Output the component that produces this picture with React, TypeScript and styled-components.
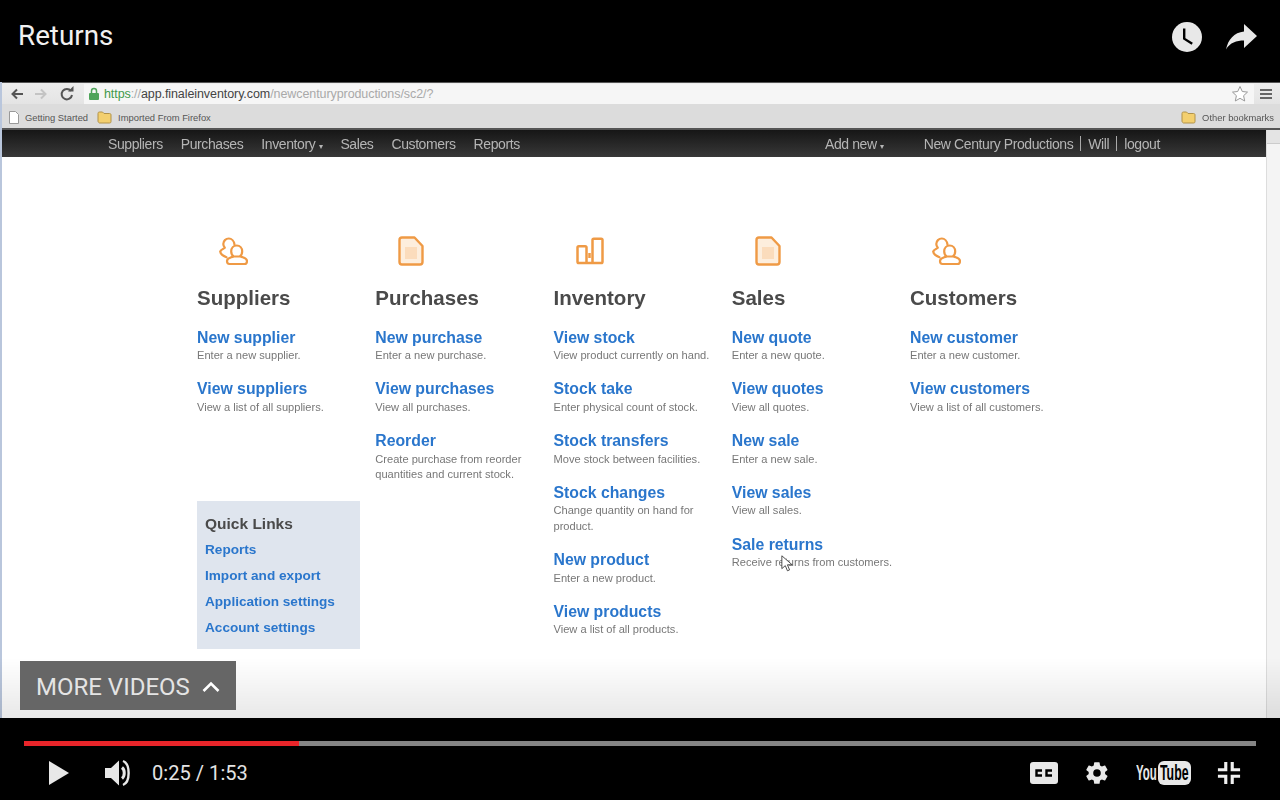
import React from "react";
import styled, { createGlobalStyle } from "styled-components";

const Global = createGlobalStyle`
  html, body { margin: 0; padding: 0; background: #000; overflow: hidden; }
  * { box-sizing: border-box; }
`;

type Item = { link: string; desc: string };
type Col = { title: string; icon: "people" | "doc" | "chart"; items: Item[] };

const columns: Col[] = [
  {
    title: "Suppliers",
    icon: "people",
    items: [
      { link: "New supplier", desc: "Enter a new supplier." },
      { link: "View suppliers", desc: "View a list of all suppliers." },
    ],
  },
  {
    title: "Purchases",
    icon: "doc",
    items: [
      { link: "New purchase", desc: "Enter a new purchase." },
      { link: "View purchases", desc: "View all purchases." },
      { link: "Reorder", desc: "Create purchase from reorder quantities and current stock." },
    ],
  },
  {
    title: "Inventory",
    icon: "chart",
    items: [
      { link: "View stock", desc: "View product currently on hand." },
      { link: "Stock take", desc: "Enter physical count of stock." },
      { link: "Stock transfers", desc: "Move stock between facilities." },
      { link: "Stock changes", desc: "Change quantity on hand for product." },
      { link: "New product", desc: "Enter a new product." },
      { link: "View products", desc: "View a list of all products." },
    ],
  },
  {
    title: "Sales",
    icon: "doc",
    items: [
      { link: "New quote", desc: "Enter a new quote." },
      { link: "View quotes", desc: "View all quotes." },
      { link: "New sale", desc: "Enter a new sale." },
      { link: "View sales", desc: "View all sales." },
      { link: "Sale returns", desc: "Receive returns from customers." },
    ],
  },
  {
    title: "Customers",
    icon: "people",
    items: [
      { link: "New customer", desc: "Enter a new customer." },
      { link: "View customers", desc: "View a list of all customers." },
    ],
  },
];

const quickLinks = ["Reports", "Import and export", "Application settings", "Account settings"];

const PeopleIcon = () => (
  <svg width="30" height="30" viewBox="0 0 30 30" fill="none" stroke="#ef9a45" strokeWidth="2.200" strokeLinejoin="round" strokeLinecap="round">
    <path d="M16.500 8.500C16 5 13.500 2.500 10.800 2.500 7.800 2.500 5.300 5 5.300 8c0 1.500.6 2.800 1.500 3.800C5 13 2.800 14 2.200 15.500c.3 2 3 4.500 6.300 5.800" />
    <path d="M18.700 9.500c3.200 0 5.500 2.600 5.500 5.800 0 2.400-1 4.200-2.400 5.200h-6.200c-1.400-1-2.400-2.800-2.400-5.200 0-3.200 2.300-5.800 5.500-5.800z" />
    <path d="M15 20.500c-1.500 1-6 1.500-6 4.500 0 2 .8 3 2.500 3h15c1.700 0 2.500-1 2.500-3 0-3-4.500-3.500-6-4.500" />
  </svg>
);

const DocIcon = () => (
  <svg width="30" height="30" viewBox="0 0 30 30" fill="#fdeedd" stroke="#ef9a45" strokeWidth="2.400" strokeLinejoin="round">
    <path d="M3.500 4c0-1.500 1-2.500 2.500-2.500h12.500l8 8.500v16c0 1.500-1 2.500-2.500 2.500H6c-1.500 0-2.500-1-2.500-2.500z" />
    <rect x="9" y="11" width="12" height="12" fill="#fbdcbc" stroke="none" />
  </svg>
);

const ChartIcon = () => (
  <svg width="30" height="30" viewBox="0 0 30 30" fill="none" stroke="#ef9a45" strokeWidth="2.500" strokeLinejoin="round">
    <path d="M2.500 11.500c0-.8.5-1.300 1.300-1.300h6.400c.8 0 1.300.5 1.300 1.300V27H3.800c-.8 0-1.300-.5-1.300-1.300zM11.500 27h6M17.500 27V4c0-.8.5-1.300 1.300-1.300h7.400c.8 0 1.300.5 1.300 1.300v21.700c0 .8-.5 1.300-1.300 1.300h-8.700zM14.500 17v5" />
  </svg>
);

const icons = { people: <PeopleIcon />, doc: <DocIcon />, chart: <ChartIcon /> };

const Folder = () => (
  <svg width="15" height="13" viewBox="0 0 15 13">
    <path d="M1 2.500C1 1.500 1.500 1 2.500 1h3l1.500 1.500h5.500c1 0 1.500.5 1.500 1.500v6.500c0 1-.5 1.500-1.500 1.500h-10C1.500 11.500 1 11 1 10z" fill="#f3cf6e" stroke="#b0924a" strokeWidth="1" />
  </svg>
);

const App = () => (
  <Player>
    <Global />
    <TitleBar>
      <Title>Returns</Title>
      <TopIcons>
        <svg width="32" height="32" viewBox="0 0 32 32">
          <circle cx="16" cy="16" r="15" fill="#e8e8e8" />
          <path d="M13.200 7.500v10.200l8 5" fill="none" stroke="#000" strokeWidth="2.400" />
        </svg>
        <svg width="32" height="28" viewBox="0 0 32 28">
          <path d="M19 1l13 12-13 12v-7.500C11.500 17.500 5 19.500 1 26.500 3 16.500 9 9.500 19 8.500z" fill="#e8e8e8" />
        </svg>
      </TopIcons>
    </TitleBar>

    <Video>
      <Capture>
        <UrlRow>
          <svg width="70" height="16" viewBox="0 0 70 16">
            <path d="M15 8H5M9 3.500L4.500 8 9 12.500" fill="none" stroke="#555" strokeWidth="2" />
            <path d="M27 8h10M33 3.500L37.500 8 33 12.500" fill="none" stroke="#c4c4c4" strokeWidth="2" />
            <path d="M63 5a5.200 5.200 0 1 0 1 4" fill="none" stroke="#555" strokeWidth="2" />
            <path d="M60 5.500h5.500V0z" fill="#555" />
          </svg>
          <UrlField>
            <svg width="12" height="14" viewBox="0 0 12 14">
              <rect x="1" y="6" width="10" height="7" rx="1" fill="#4fa45a" />
              <path d="M3.500 6V4a2.500 2.500 0 0 1 5 0v2" fill="none" stroke="#4fa45a" strokeWidth="1.500" />
            </svg>
            <Url>
              <UrlGreen>https</UrlGreen>
              <UrlGrey>://</UrlGrey>
              app.finaleinventory.com
              <UrlGrey>/newcenturyproductions/sc2/?</UrlGrey>
            </Url>
            <Star viewBox="0 0 18 18" width="18" height="18">
              <path d="M9 1.500l2.300 5 5.200.6-3.900 3.600 1.100 5.300L9 13.300 4.300 16l1.100-5.300L1.500 7.100l5.200-.6z" fill="#fff" stroke="#9a9a9a" strokeWidth="1" />
            </Star>
          </UrlField>
          <Burger><i /><i /><i /></Burger>
        </UrlRow>

        <BookmarkRow>
          <svg width="10" height="13" viewBox="0 0 10 13">
            <path d="M.5.500h6l3 3v9h-9z" fill="#fff" stroke="#999" />
          </svg>
          <Bookmark>Getting Started</Bookmark>
          <Folder />
          <Bookmark>Imported From Firefox</Bookmark>
          <BookmarkSpacer />
          <Folder />
          <Bookmark>Other bookmarks</Bookmark>
        </BookmarkRow>

        <PageArea>
          <PageMain>
            <NavBar>
              <NavGroup>
                <NavItem>Suppliers</NavItem>
                <NavItem>Purchases</NavItem>
                <NavItem>Inventory <Caret>▾</Caret></NavItem>
                <NavItem>Sales</NavItem>
                <NavItem>Customers</NavItem>
                <NavItem>Reports</NavItem>
              </NavGroup>
              <NavRight>
                <NavItem>Add new <Caret>▾</Caret></NavItem>
                <NavUser>
                  <NavItem>New Century Productions</NavItem>
                  <Pipe />
                  <NavItem>Will</NavItem>
                  <Pipe />
                  <NavItem>logout</NavItem>
                </NavUser>
              </NavRight>
            </NavBar>

            <Grid>
              {columns.map((c, i) => (
                <Column key={c.title}>
                  <IconBox>{icons[c.icon]}</IconBox>
                  <Heading>{c.title}</Heading>
                  {c.items.map((it) => (
                    <Entry key={it.link}>
                      <EntryLink>{it.link}</EntryLink>
                      <EntryDesc>{it.desc}</EntryDesc>
                    </Entry>
                  ))}
                  {i === 0 && (
                    <QuickBox>
                      <QuickTitle>Quick Links</QuickTitle>
                      {quickLinks.map((q) => (
                        <QuickLink key={q}>{q}</QuickLink>
                      ))}
                    </QuickBox>
                  )}
                </Column>
              ))}
            </Grid>
          </PageMain>
          <Scrollbar>
            <ScrollButton />
          </Scrollbar>
        </PageArea>
      </Capture>

      <Cursor width="12" height="19" viewBox="0 0 14 20">
        <path d="M1 1v15l4-3.500 2.500 6 2.500-1-2.500-6H13z" fill="#fff" stroke="#333" strokeWidth="1" />
      </Cursor>
      <BottomFade />
      <MoreVideos>
        MORE VIDEOS
        <svg width="18" height="12" viewBox="0 0 18 12">
          <path d="M1.500 10L9 2.500 16.500 10" fill="none" stroke="#fff" strokeWidth="2.600" />
        </svg>
      </MoreVideos>
    </Video>

    <Controls>
      <Progress>
        <Played />
      </Progress>
      <ControlRow>
        <ControlLeft>
          <svg width="22" height="26" viewBox="0 0 22 26">
            <path d="M1 1l20 12L1 25z" fill="#e8e8e8" />
          </svg>
          <VolumeIcon width="30" height="28" viewBox="0 0 30 28">
            <path d="M1 9h6l8-7.500v25L7 19H1z" fill="#e8e8e8" />
            <path d="M18 8.500c3 2.500 3 8.500 0 11" fill="none" stroke="#e8e8e8" strokeWidth="3" />
            <path d="M19 2c7.500 3 7.500 21 0 24" fill="none" stroke="#e8e8e8" strokeWidth="2.400" />
          </VolumeIcon>
          <Time>0:25 / 1:53</Time>
        </ControlLeft>
        <ControlRight>
          <svg width="28" height="22" viewBox="0 0 28 22">
            <rect width="28" height="22" rx="3" fill="#e8e8e8" />
            <path d="M12 8.500H6.500v5H12M22 8.500h-5.500v5H22" fill="none" stroke="#000" strokeWidth="2.400" />
          </svg>
          <svg width="26" height="26" viewBox="0 0 24 24">
            <path d="M19.400 13c.1-.3.100-.7.100-1s0-.7-.1-1l2.100-1.600c.2-.2.200-.4.100-.6l-2-3.500c-.1-.2-.4-.3-.6-.2l-2.500 1c-.5-.4-1.100-.7-1.700-1l-.4-2.700c0-.2-.2-.4-.5-.4h-4c-.3 0-.5.200-.5.400l-.4 2.700c-.6.300-1.200.6-1.700 1l-2.500-1c-.2-.1-.5 0-.6.200l-2 3.500c-.1.200-.1.400.1.600L4.400 11c-.1.300-.1.700-.1 1s0 .7.100 1l-2.100 1.600c-.2.200-.2.400-.1.600l2 3.500c.1.200.4.300.6.200l2.500-1c.5.400 1.100.7 1.700 1l.4 2.700c0 .2.200.4.500.4h4c.3 0 .5-.2.500-.4l.4-2.700c.6-.3 1.200-.6 1.700-1l2.500 1c.2.100.5 0 .6-.2l2-3.500c.1-.2.100-.4-.1-.6zM12 15.500a3.500 3.500 0 1 1 0-7 3.500 3.500 0 0 1 0 7z" fill="#e8e8e8" />
          </svg>
          <YouTubeLogo>
            <YouWord><span>You</span></YouWord>
            <TubeWord><span>Tube</span></TubeWord>
          </YouTubeLogo>
          <svg width="24" height="24" viewBox="0 0 26 26">
            <path d="M9.500 1v8.500H1M16.500 1v8.500H25M9.500 25v-8.500H1M16.500 25v-8.500H25" fill="none" stroke="#f0f0f0" strokeWidth="3.400" />
          </svg>
        </ControlRight>
      </ControlRow>
    </Controls>
  </Player>
);

export default App;

const Player = styled.div`
  width: 1280px;
  height: 800px;
  display: flex;
  flex-direction: column;
  background: #000;
  font-family: Roboto, sans-serif;
`;

const TitleBar = styled.div`
  height: 82px;
  flex: none;
  display: flex;
  align-items: flex-start;
  justify-content: space-between;
  padding: 20px 23px 0 18px;
`;

const Title = styled.div`
  color: #f1f1f1;
  font-size: 27.8px;
  line-height: 32px;
`;

const TopIcons = styled.div`
  display: flex;
  align-items: center;
  gap: 22px;
  padding-top: 1px;
`;

const Video = styled.div`
  position: relative;
  height: 636px;
  flex: none;
  overflow: hidden;
  background: #fff;
`;

const Capture = styled.div`
  height: 100%;
  display: flex;
  flex-direction: column;
  border-left: 2px solid #b9c6dc;
  filter: blur(0.65px);
  font-family: "Liberation Sans", Arial, sans-serif;
`;

const UrlRow = styled.div`
  height: 22px;
  flex: none;
  display: flex;
  align-items: center;
  gap: 6px;
  padding: 0 8px 0 6px;
  background: linear-gradient(#ededed, #e4e4e4);
  border-top: 1px solid #555;
`;

const UrlField = styled.div`
  flex: 1;
  height: 20px;
  display: flex;
  align-items: center;
  padding: 0 5px 0 4px;
  background: #f6f6f6;
`;

const Url = styled.div`
  flex: 1;
  margin-left: 4px;
  font-size: 12.5px;
  color: #444;
  letter-spacing: -0.08px;
  white-space: nowrap;
`;

const UrlGreen = styled.span`
  color: #3f9a4c;
`;

const UrlGrey = styled.span`
  color: #a9a9a9;
`;

const Star = styled.svg`
  flex: none;
`;

const Burger = styled.div`
  width: 12px;
  display: flex;
  flex-direction: column;
  gap: 2px;

  i {
    display: block;
    height: 2px;
    background: #666;
  }
`;

const BookmarkRow = styled.div`
  height: 24px;
  flex: none;
  display: flex;
  align-items: center;
  gap: 4px;
  padding: 3px 1px 0 7px;
  background: #dcdcdc;
`;

const Bookmark = styled.span`
  font-size: 9.4px;
  color: #555;
  margin-left: 2px;
  margin-right: 5px;
  white-space: nowrap;
`;

const BookmarkSpacer = styled.div`
  flex: 1;
`;

const PageArea = styled.div`
  flex: 1;
  display: flex;
  min-height: 0;
  border-top: 2px solid #555;
`;

const PageMain = styled.div`
  flex: 1;
  display: flex;
  flex-direction: column;
`;

const Scrollbar = styled.div`
  width: 14px;
  flex: none;
  background: #f4f4f4;
  border-left: 1px solid #ddd;
`;

const ScrollButton = styled.div`
  height: 14px;
  background: #e4e4e4;
  border-bottom: 1px solid #ccc;
`;

const NavBar = styled.div`
  height: 27px;
  flex: none;
  display: flex;
  align-items: center;
  justify-content: space-between;
  padding: 0 106px 0 106px;
  background: linear-gradient(#161616, #383838);
`;

const NavGroup = styled.div`
  display: flex;
  align-items: center;
  gap: 18px;
`;

const NavRight = styled.div`
  display: flex;
  align-items: center;
  gap: 40px;
`;

const NavUser = styled.div`
  display: flex;
  align-items: center;
  gap: 7px;
`;

const NavItem = styled.span`
  color: #b5b5b5;
  font-size: 14px;
  letter-spacing: -0.4px;
  white-space: nowrap;
`;

const Caret = styled.span`
  font-size: 8px;
`;

const Pipe = styled.i`
  display: block;
  width: 1px;
  height: 15px;
  background: #aaa;
`;

const Grid = styled.div`
  display: grid;
  grid-template-columns: repeat(5, 178.25px);
  padding: 79px 0 0 195px;
`;

const Column = styled.div`
  display: flex;
  flex-direction: column;
  align-items: flex-start;
`;

const IconBox = styled.div`
  width: 72px;
  height: 30px;
  display: flex;
  justify-content: center;
`;

const Heading = styled.div`
  margin: 20px 0 16.5px;
  font-size: 20.5px;
  line-height: 24px;
  font-weight: bold;
  color: #4a4a4a;
`;

const Entry = styled.div`
  width: 165px;
  margin-bottom: 14.75px;
`;

const EntryLink = styled.div`
  font-size: 15.8px;
  line-height: 21px;
  font-weight: bold;
  color: #2a76cc;
`;

const EntryDesc = styled.div`
  padding-top: 0.5px;
  font-size: 11.1px;
  line-height: 15.5px;
  color: #777;
`;

const QuickBox = styled.div`
  width: 163px;
  height: 148px;
  margin-top: 71px;
  padding: 14px 8px 0;
  background: #dfe5ee;
`;

const QuickTitle = styled.div`
  font-size: 15.5px;
  line-height: 18px;
  font-weight: bold;
  color: #4a4a4a;
  margin-bottom: 8px;
`;

const QuickLink = styled.div`
  font-size: 13.6px;
  line-height: 18px;
  font-weight: bold;
  color: #2a76cc;
  margin-bottom: 8px;
`;

const Cursor = styled.svg`
  position: absolute;
  left: 781px;
  top: 472px;
`;

const BottomFade = styled.div`
  position: absolute;
  left: 0;
  right: 0;
  bottom: 0;
  height: 60px;
  background: linear-gradient(rgba(0, 0, 0, 0), rgba(0, 0, 0, 0.09));
`;

const MoreVideos = styled.div`
  position: absolute;
  left: 20px;
  top: 579px;
  width: 216px;
  height: 49px;
  display: flex;
  align-items: center;
  gap: 12px;
  padding: 2px 0 0 16px;
  background: #666;
  color: #e4e4e4;
  font-family: Roboto, sans-serif;
  font-size: 24px;
`;

const Controls = styled.div`
  flex: 1;
  padding-top: 23px;
`;

const Progress = styled.div`
  height: 5px;
  margin: 0 24px;
  background: #858585;
`;

const Played = styled.div`
  width: 275px;
  height: 100%;
  background: #e9252a;
`;

const ControlRow = styled.div`
  display: flex;
  align-items: center;
  justify-content: space-between;
  height: 28px;
  margin-top: 13px;
  padding: 0 39px 0 48px;
`;

const ControlLeft = styled.div`
  display: flex;
  align-items: center;
  gap: 34px;
`;

const VolumeIcon = styled.svg`
  flex: none;
`;

const Time = styled.div`
  margin-left: -16px;
  color: #e4e4e4;
  font-size: 20px;
  letter-spacing: 0.05px;
`;

const ControlRight = styled.div`
  display: flex;
  align-items: center;
  gap: 26px;
`;

const YouTubeLogo = styled.div`
  display: flex;
  align-items: center;
  width: 55px;
  height: 24px;
  font-family: "Liberation Sans", sans-serif;
  font-size: 22px;
  font-weight: bold;
`;

const YouWord = styled.div`
  width: 22px;
  color: #e8e8e8;

  span {
    display: inline-block;
    transform: scaleX(0.52);
    transform-origin: left;
  }
`;

const TubeWord = styled.div`
  width: 33px;
  height: 24px;
  padding-left: 2px;
  line-height: 24px;
  color: #000;
  background: #e8e8e8;
  border-radius: 6px;

  span {
    display: inline-block;
    transform: scaleX(0.56);
    transform-origin: left;
  }
`;
